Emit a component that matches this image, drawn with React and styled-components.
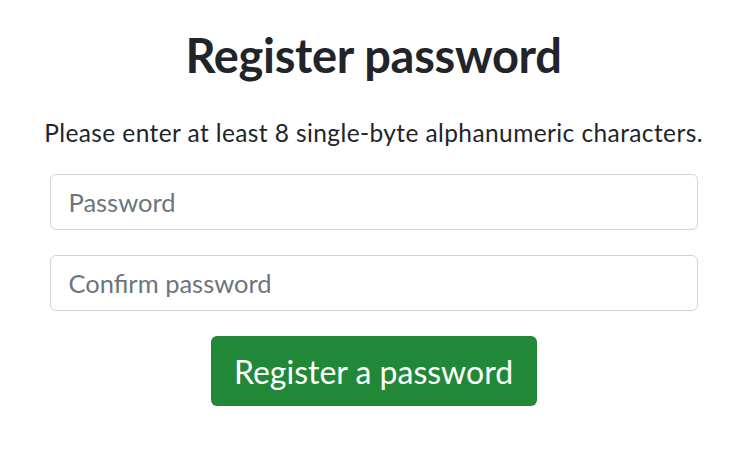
import React from "react";
import styled, { createGlobalStyle } from "styled-components";

const Global = createGlobalStyle`
  html, body { margin: 0; padding: 0; background: #fff; }
  body { font-family: "Lato", "Noto Sans", sans-serif; color: #212529; }
`;

const Page = styled.main`
  width: 747px;
  display: flex;
  flex-direction: column;
  align-items: center;
  padding-top: 26px;
`;

const Title = styled.h1`
  margin: 0;
  font-size: 47px;
  font-weight: 700;
  line-height: 58px;
  letter-spacing: -0.3px;
`;

const Lead = styled.p`
  margin: 33px 0 0;
  font-size: 24.5px;
  line-height: 32px;
  letter-spacing: 0.4px;
`;

const Form = styled.form`
  width: 648px;
  margin-top: 25px;
  display: flex;
  flex-direction: column;
  align-items: center;
  gap: 25px;
`;

const Input = styled.input`
  box-sizing: border-box;
  width: 100%;
  height: 56px;
  padding: 0 18px;
  border: 1px solid #ced4da;
  border-radius: 6px;
  font-family: inherit;
  font-size: 25.5px;
  color: #212529;
  outline: none;
  &::placeholder { color: #6c757d; }
`;

const Button = styled.button`
  box-sizing: border-box;
  width: 326px;
  height: 70px;
  border: none;
  border-radius: 6px;
  background: #218838;
  color: #fff;
  font-family: inherit;
  font-size: 32px;
  cursor: pointer;
`;

export default function App() {
  return (
    <>
      <Global />
      <Page>
        <Title>Register password</Title>
        <Lead>Please enter at least 8 single-byte alphanumeric characters.</Lead>
        <Form onSubmit={(e) => e.preventDefault()}>
          <Input type="password" placeholder="Password" />
          <Input type="password" placeholder="Confirm password" />
          <Button type="submit">Register a password</Button>
        </Form>
      </Page>
    </>
  );
}
